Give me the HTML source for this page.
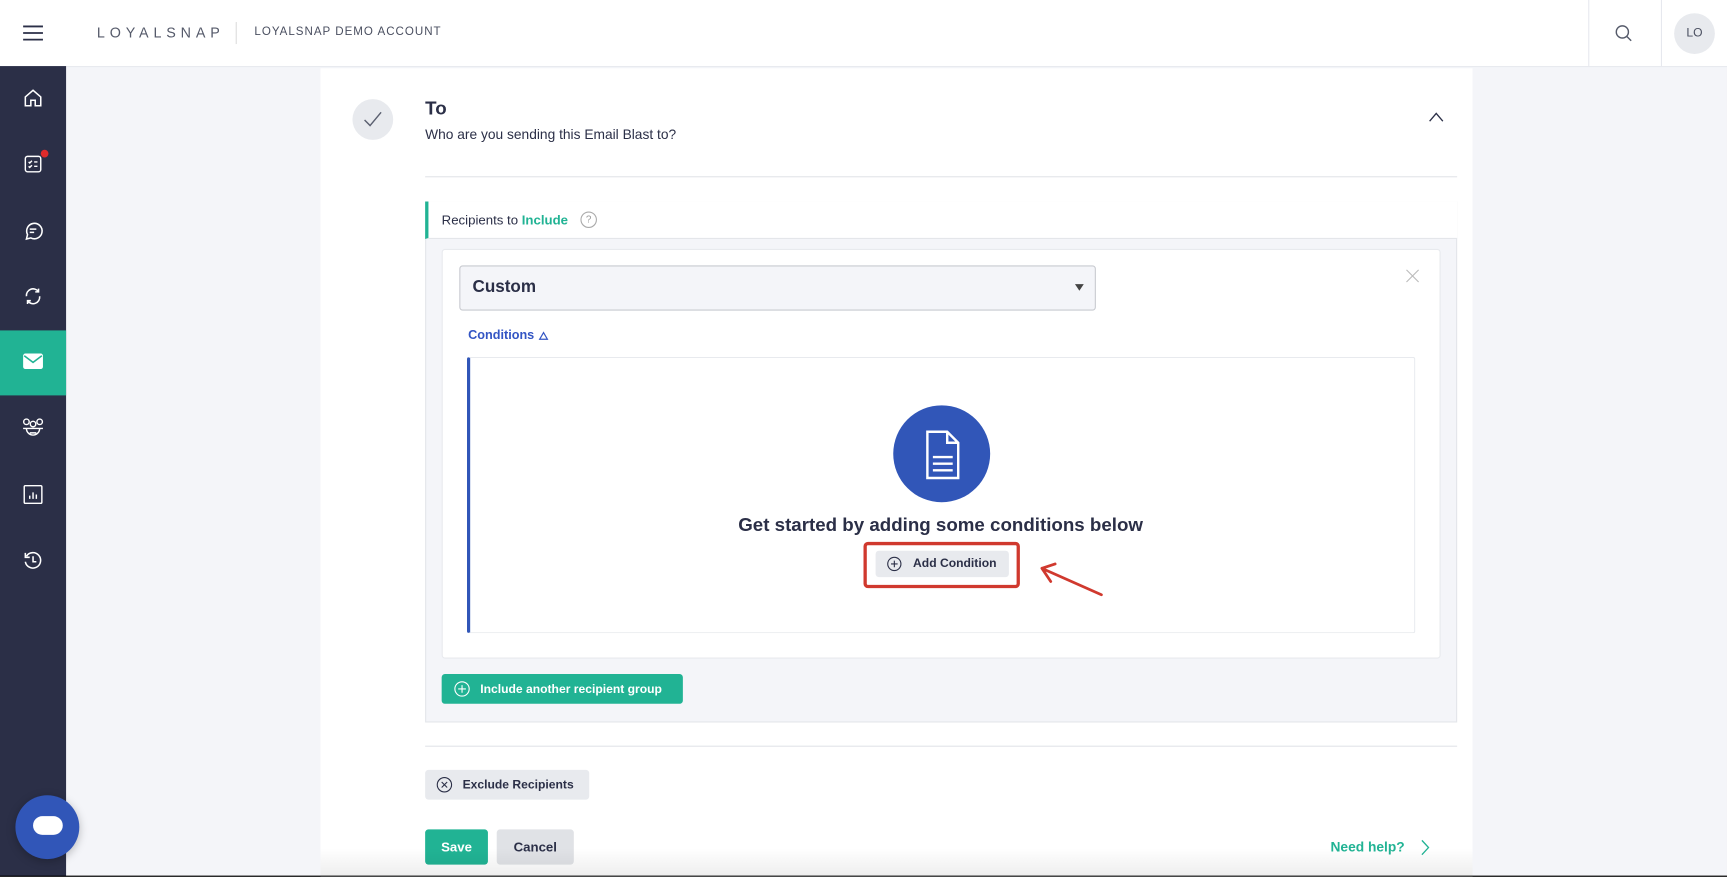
<!DOCTYPE html>
<html><head><meta charset="utf-8"><style>
html,body{margin:0;padding:0;width:1727px;height:877px;overflow:hidden;background:#000}
#w{position:absolute;left:0;top:0;width:1568px;height:796px;transform:scale(1.1014);transform-origin:0 0;background:#f4f5f9;font-family:"Liberation Sans",sans-serif;color:#2b2f47;overflow:hidden}
.a{position:absolute}
svg{position:absolute;overflow:visible}
.btn{position:absolute;border-radius:3px;font-size:11.5px;font-weight:bold;display:flex;align-items:center}
</style></head><body><div id="w">
<div class="a" style="left:0;top:0;width:1568px;height:60px;background:#fff;border-bottom:1px solid #e6e8ee"></div>
<svg style="left:21px;top:23px" width="18" height="14"><path d="M0 1H18M0 7H18M0 13H18" stroke="#2b2f47" stroke-width="1.6"/></svg>
<div class="a" style="left:88px;top:22px;font-size:13px;letter-spacing:4.4px;color:#555a6a">LOYALSNAP</div>
<div class="a" style="left:214px;top:20px;width:1px;height:20px;background:#ddd"></div>
<div class="a" style="left:231px;top:23px;font-size:10.5px;letter-spacing:0.9px;color:#4a4f60">LOYALSNAP DEMO ACCOUNT</div>
<div class="a" style="left:1442px;top:0;width:1px;height:60px;background:#e6e8ee"></div>
<div class="a" style="left:1508px;top:0;width:1px;height:60px;background:#e6e8ee"></div>
<svg style="left:1466px;top:22px" width="16" height="16"><circle cx="7" cy="7" r="5.5" fill="none" stroke="#555a6a" stroke-width="1.3"/><path d="M11 11L15 15" stroke="#555a6a" stroke-width="1.3"/></svg>
<div class="a" style="left:1520px;top:12px;width:37px;height:37px;border-radius:50%;background:#e8eaee;font-size:11px;color:#4a4f60;text-align:center;line-height:37px">LO</div>
<div class="a" style="left:0;top:60px;width:60px;height:736px;background:#2b2f47"></div>
<div class="a" style="left:0;top:300px;width:60px;height:59px;background:#21b394"></div>
<svg style="left:21px;top:80px" width="18" height="18" fill="none" stroke="#fff" stroke-width="1.4"><path d="M2 8L9 2L16 8V16H11V11H7V16H2Z"/></svg>
<svg style="left:22px;top:141px" width="16" height="16" fill="none" stroke="#fff" stroke-width="1.3"><rect x="1" y="1" width="14" height="14" rx="2"/><path d="M4 6L5 7L7 5M9 6H12M4 10L5 11L7 9M9 10H12"/></svg>
<div class="a" style="left:37px;top:136px;width:7px;height:7px;border-radius:50%;background:#e02b2b"></div>
<svg style="left:21px;top:200px" width="18" height="18" fill="none" stroke="#fff" stroke-width="1.4"><path d="M3 17L4 13A7 7 0 1 1 7 16Z"/><path d="M6 8H12M6 11H10"/></svg>
<svg style="left:21px;top:260px" width="18" height="18" fill="none" stroke="#fff" stroke-width="1.4"><path d="M3 9A6 6 0 0 1 14 5M15 9A6 6 0 0 1 4 13M14 2V5H11M4 16V13H7"/></svg>
<svg style="left:21px;top:321px" width="18" height="14"><rect x="0" y="0" width="18" height="14" rx="2" fill="#fff"/><path d="M1 2L9 8L17 2" stroke="#21b394" stroke-width="1.4" fill="none"/></svg>
<svg style="left:20px;top:379px" width="20" height="20" fill="none" stroke="#fff" stroke-width="1.3"><circle cx="4" cy="4" r="2.5"/><circle cx="16" cy="4" r="2.5"/><circle cx="10" cy="6" r="2.5"/><path d="M1 10H19M4 10A6 6 0 0 0 16 10M7 14H13"/></svg>
<svg style="left:21px;top:440px" width="18" height="18" fill="none" stroke="#fff" stroke-width="1.3"><rect x="1" y="1" width="16" height="16" rx="1"/><path d="M6 13V10M9 13V7M12 13V9"/></svg>
<svg style="left:21px;top:500px" width="18" height="18" fill="none" stroke="#fff" stroke-width="1.4"><path d="M3 5A7 7 0 1 1 2 10M2 2V6H6M9 5V10H12"/></svg>
<div class="a" style="left:14px;top:722px;width:58px;height:58px;border-radius:50%;background:#3156b8;box-shadow:0 2px 8px rgba(0,0,0,.25)"></div>
<div class="a" style="left:30px;top:741px;width:27px;height:17px;border-radius:9px;background:#fff"></div>
<div class="a" style="left:291px;top:62px;width:1046px;height:740px;background:#fff"></div>
<div class="a" style="left:320px;top:90px;width:37px;height:37px;border-radius:50%;background:#e8eaee"></div>
<svg style="left:330px;top:101px" width="17" height="14"><path d="M1 8L6 13L16 1" fill="none" stroke="#5b6070" stroke-width="1.3"/></svg>
<div class="a" style="left:386px;top:89px;font-size:17px;font-weight:bold">To</div>
<div class="a" style="left:386px;top:115px;font-size:12.5px">Who are you sending this Email Blast to?</div>
<svg style="left:1297px;top:102px" width="14" height="8"><path d="M1 8L7 1L13 8" fill="none" stroke="#2b2f47" stroke-width="1.2"/></svg>
<div class="a" style="left:386px;top:160px;width:937px;height:1px;background:#e2e4e8"></div>
<div class="a" style="left:386px;top:183px;width:935px;height:471px;background:#f4f5f9;border:1px solid #e4e6ea"></div>
<div class="a" style="left:386px;top:183px;width:934px;height:33px;background:#fff;border-left:3px solid #21b394;border-bottom:1px solid #e4e6ea"></div>
<div class="a" style="left:401px;top:193px;font-size:12px">Recipients to <b style="color:#21b394">Include</b></div>
<div class="a" style="left:527px;top:192px;width:13px;height:13px;border-radius:50%;border:1px solid #aaa;font-size:9px;color:#999;text-align:center;line-height:13px">?</div>
<div class="a" style="left:401px;top:226px;width:905px;height:370px;background:#fff;border:1px solid #e8eaee;border-radius:3px"></div>
<div class="a" style="left:417px;top:241px;width:576px;height:39px;background:#f4f5f9;border:1px solid #c8cad0;border-radius:3px"></div>
<div class="a" style="left:429px;top:252px;font-size:15.5px;font-weight:bold">Custom</div>
<svg style="left:976px;top:258px" width="8" height="6"><path d="M0 0H8L4 6Z" fill="#444"/></svg>
<svg style="left:1277px;top:245px" width="11" height="11"><path d="M0 0L11 11M11 0L0 11" stroke="#bbb" stroke-width="1"/></svg>
<div class="a" style="left:425px;top:299px;font-size:11.5px;color:#3355c4;font-weight:bold">Conditions</div>
<svg style="left:489px;top:301px" width="9" height="8"><path d="M1 7H8L4.5 1Z" fill="none" stroke="#3355c4" stroke-width="1.1"/></svg>
<div class="a" style="left:424px;top:324px;width:857px;height:249px;border:1px solid #e8eaee;border-left:3px solid #3156b8;border-radius:2px"></div>
<div class="a" style="left:811px;top:368px;width:88px;height:88px;border-radius:50%;background:#3156b8"></div>
<svg style="left:839px;top:391px" width="34" height="46" fill="none" stroke="#fff" stroke-width="2.2"><path d="M3 1H21L31 11V43H3Z"/><path d="M21 1V11H31M8 24H26M8 30H26M8 36H26"/></svg>
<div class="a" style="left:424px;top:467px;width:860px;text-align:center;font-size:17px;font-weight:bold">Get started by adding some conditions below</div>
<div class="a" style="left:784px;top:492px;width:136px;height:36px;border:3px solid #d0392e;border-radius:4px"></div>
<div class="btn" style="left:795px;top:500px;width:121px;height:24px;background:#e8eaee;color:#2b2f47;font-size:11px"><svg style="left:10px;top:5px" width="14" height="14" fill="none" stroke="#2b2f47"><circle cx="7" cy="7" r="6"/><path d="M7 4V10M4 7H10"/></svg><span style="margin-left:34px">Add Condition</span></div>
<svg style="left:944px;top:510px" width="60" height="34" fill="none" stroke="#d0392e" stroke-width="2.5" stroke-linecap="round"><path d="M56 30L2 6M2 6L14 2M2 6L10 18"/></svg>
<div class="btn" style="left:401px;top:612px;width:219px;height:27px;background:#21b394;color:#fff;font-size:11px"><svg style="left:11px;top:6px" width="15" height="15" fill="none" stroke="#fff"><circle cx="7.5" cy="7.5" r="6.5"/><path d="M7.5 4V11M4 7.5H11"/></svg><span style="margin-left:35px">Include another recipient group</span></div>
<div class="a" style="left:386px;top:677px;width:937px;height:1px;background:#e2e4e8"></div>
<div class="btn" style="left:386px;top:699px;width:149px;height:27px;background:#e8eaee;font-size:11px"><svg style="left:10px;top:6px" width="15" height="15" fill="none" stroke="#2b2f47"><circle cx="7.5" cy="7.5" r="6.5"/><path d="M5 5L10 10M10 5L5 10"/></svg><span style="margin-left:34px">Exclude Recipients</span></div>
<div class="btn" style="left:386px;top:753px;width:57px;height:32px;background:#21b394;color:#fff;justify-content:center;font-size:12px">Save</div>
<div class="btn" style="left:451px;top:753px;width:70px;height:32px;background:#e0e2e6;justify-content:center;font-size:12px">Cancel</div>
<div class="a" style="left:1208px;top:762px;font-size:12.5px;color:#21b394;font-weight:bold">Need help?</div>
<svg style="left:1290px;top:762px" width="8" height="15"><path d="M1 1L7 7.5L1 14" fill="none" stroke="#21b394" stroke-width="1.2"/></svg>
<div class="a" style="left:291px;top:770px;width:1046px;height:26px;background:linear-gradient(rgba(0,0,0,0),rgba(0,0,0,.07))"></div>
<div class="a" style="left:0;top:795px;width:1568px;height:1px;background:#000"></div>
</div></body></html>
